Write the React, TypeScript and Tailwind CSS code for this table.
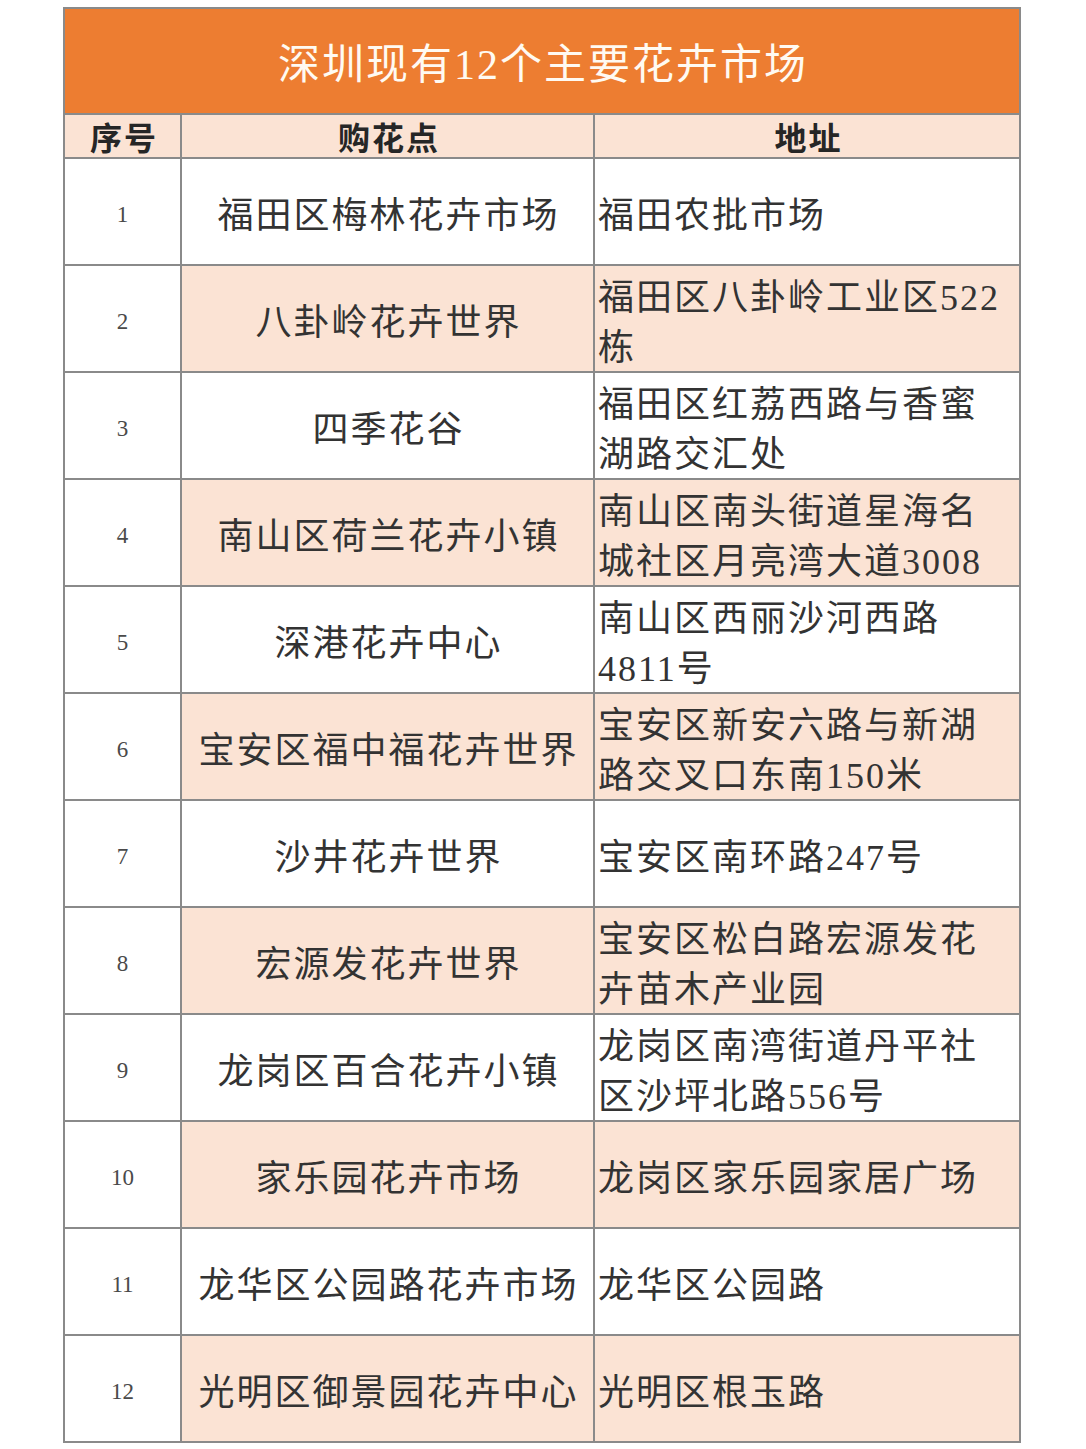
import React from "react";

const rows: { name: string; addr: string[] }[] = [
  { name: "福田区梅林花卉市场", addr: ["福田农批市场"] },
  { name: "八卦岭花卉世界", addr: ["福田区八卦岭工业区522", "栋"] },
  { name: "四季花谷", addr: ["福田区红荔西路与香蜜", "湖路交汇处"] },
  { name: "南山区荷兰花卉小镇", addr: ["南山区南头街道星海名", "城社区月亮湾大道3008"] },
  { name: "深港花卉中心", addr: ["南山区西丽沙河西路", "4811号"] },
  { name: "宝安区福中福花卉世界", addr: ["宝安区新安六路与新湖", "路交叉口东南150米"] },
  { name: "沙井花卉世界", addr: ["宝安区南环路247号"] },
  { name: "宏源发花卉世界", addr: ["宝安区松白路宏源发花", "卉苗木产业园"] },
  { name: "龙岗区百合花卉小镇", addr: ["龙岗区南湾街道丹平社", "区沙坪北路556号"] },
  { name: "家乐园花卉市场", addr: ["龙岗区家乐园家居广场"] },
  { name: "龙华区公园路花卉市场", addr: ["龙华区公园路"] },
  { name: "光明区御景园花卉中心", addr: ["光明区根玉路"] },
];

const font = { fontFamily: '"Liberation Serif", "Noto Sans CJK SC", serif' };

export default function App() {
  return (
    <div className="min-h-[1449px] w-[1086px] bg-white pt-[7px]" style={font}>
      <div className="ml-[63px] w-[958px] border-2 border-[#8a8a8a] bg-[#8a8a8a]">
        <div className="flex h-[104px] items-center justify-center bg-[#ed7d31] pl-[2px] pt-[8px] text-[42px] tracking-[2px] text-[#fffaf2]">
          深圳现有12个主要花卉市场
        </div>
        <div className="grid grid-cols-[115px_411px_424px] gap-[2px] pt-[2px]">
          <div className="flex h-[42px] items-center justify-center bg-[#fbe3d4] pl-[3px] pt-[5px] text-[32px] font-bold tracking-[2px] text-[#262626]">
            序号
          </div>
          <div className="flex h-[42px] items-center justify-center bg-[#fbe3d4] pl-[3px] pt-[5px] text-[32px] font-bold tracking-[2px] text-[#262626]">
            购花点
          </div>
          <div className="flex h-[42px] items-center justify-center bg-[#fbe3d4] pl-[3px] pt-[5px] text-[32px] font-bold tracking-[2px] text-[#262626]">
            地址
          </div>
          {rows.map((r, i) => {
            const shaded = i % 2 === 1;
            const bg = shaded ? "bg-[#fbe3d4]" : "bg-white";
            return (
              <React.Fragment key={i}>
                <div className="flex h-[105px] items-center justify-center bg-white pt-[7px] text-[23px] text-[#4a4a4a]">
                  {i + 1}
                </div>
                <div
                  className={`flex h-[105px] items-center justify-center pl-[2px] pt-[8px] text-[36px] tracking-[2px] text-[#333333] ${bg}`}
                >
                  {r.name}
                </div>
                <div
                  className={`flex h-[105px] flex-col justify-center pl-[3px] pt-[8px] text-[36px] leading-[50px] tracking-[2px] text-[#333333] ${bg}`}
                >
                  {r.addr.map((l, j) => (
                    <div key={j} className="whitespace-nowrap">
                      {l}
                    </div>
                  ))}
                </div>
              </React.Fragment>
            );
          })}
        </div>
      </div>
    </div>
  );
}
